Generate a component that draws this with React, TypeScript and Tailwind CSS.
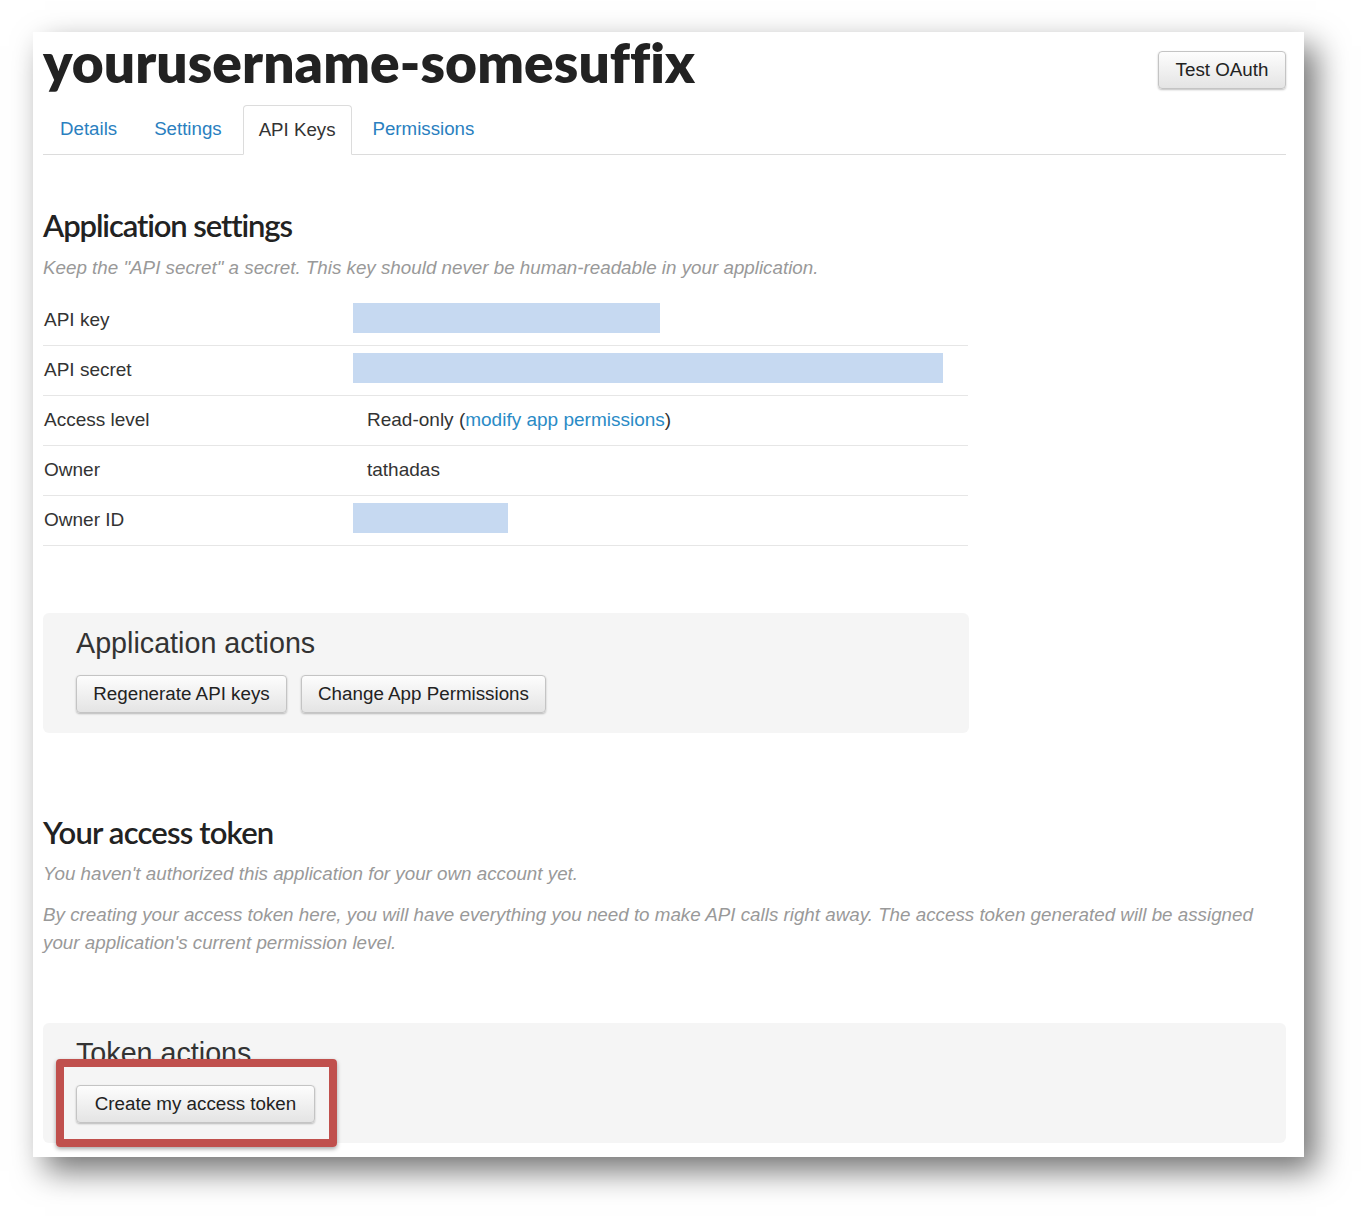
import React from "react";

const sans = "font-['Liberation_Sans',Arial,sans-serif]";

function Btn({ children, className = "" }: { children: React.ReactNode; className?: string }) {
  return (
    <button
      className={`h-[38px] rounded-[4px] border border-[#c4c4c4] bg-gradient-to-b from-[#fdfdfd] to-[#e4e4e4] px-[16px] text-[18.8px] text-[#222] shadow-[0_1px_2px_rgba(0,0,0,0.25)] ${className}`}
    >
      {children}
    </button>
  );
}

function Redact({ w }: { w: string }) {
  return <div className={`mb-[6px] h-[30px] bg-[#c6d9f1] ${w}`} />;
}

const rows: { label: string; value: React.ReactNode; redacted?: boolean }[] = [
  { label: "API key", value: <Redact w="w-[307px]" />, redacted: true },
  { label: "API secret", value: <Redact w="w-[590px]" />, redacted: true },
  {
    label: "Access level",
    value: (
      <span>
        Read-only (<a className="text-[#2a8bc6]">modify app permissions</a>)
      </span>
    ),
  },
  { label: "Owner", value: <span>tathadas</span> },
  { label: "Owner ID", value: <Redact w="w-[155px]" />, redacted: true },
];

const tabs = ["Details", "Settings", "API Keys", "Permissions"];

export default function App() {
  return (
    <div className={`min-h-[1222px] bg-white pt-[32px] pl-[33px] ${sans}`}>
      <div className="relative h-[1125px] w-[1271px] bg-white px-[10px] pr-[18px] shadow-[12px_14px_30px_rgba(0,0,0,0.55)]">
        {/* header */}
        <div className="flex items-start justify-between">
          <h1 className="mt-[-2px] font-['Lato',sans-serif] text-[55px] font-extrabold leading-[64px] tracking-[0.1px] text-[#222]">
            yourusername-somesuffix
          </h1>
          <Btn className="mt-[19px] w-[128px]">Test OAuth</Btn>
        </div>

        {/* tabs */}
        <div className="mt-[11px] flex h-[50px] items-end border-b border-[#dcdcdc] pl-[1px]">
          {tabs.map((t) => (
            <div
              key={t}
              className={
                t === "API Keys"
                  ? "mb-[-1px] mr-[5px] flex h-[50px] items-center rounded-t-[4px] border border-b-white border-[#dcdcdc] bg-white px-[15px] text-[18.7px] text-[#333]"
                  : "mr-[5px] flex h-[50px] items-center px-[16px] text-[18.7px] text-[#2a7fc0]"
              }
            >
              {t}
            </div>
          ))}
        </div>

        {/* application settings */}
        <h2 className="mt-[50px] font-['Lato',sans-serif] text-[31px] font-semibold leading-[40px] tracking-[-1.1px] text-[#222]">
          Application settings
        </h2>
        <p className="mt-[10px] text-[18.8px] italic leading-[26px] text-[#999]">
          Keep the "API secret" a secret. This key should never be human-readable in your application.
        </p>
        <div className="mt-[15px] w-[925px]">
          {rows.map((r) => (
            <div key={r.label} className="flex h-[50px] items-center border-b border-[#e6e6e6] text-[19px] text-[#333]">
              <div className="w-[310px] pl-[1px]">{r.label}</div>
              <div className={r.redacted ? "" : "pl-[14px]"}>{r.value}</div>
            </div>
          ))}
        </div>

        {/* application actions */}
        <div className="mt-[67px] h-[120px] w-[926px] rounded-[6px] bg-[#f5f5f5] px-[33px] pt-[12px]">
          <h3 className="text-[28.7px] leading-[36px] text-[#333]">Application actions</h3>
          <div className="mt-[14px] flex gap-[14px]">
            <Btn className="w-[211px]">Regenerate API keys</Btn>
            <Btn className="w-[245px]">Change App Permissions</Btn>
          </div>
        </div>

        {/* access token */}
        <h2 className="mt-[79px] font-['Lato',sans-serif] text-[31px] font-semibold leading-[40px] tracking-[-0.8px] text-[#222]">
          Your access token
        </h2>
        <p className="mt-[9px] text-[18.8px] italic leading-[26px] text-[#999]">
          You haven't authorized this application for your own account yet.
        </p>
        <p className="mt-[14px] text-[18.8px] italic leading-[28px] text-[#999]">
          By creating your access token here, you will have everything you need to make API calls right away. The access token generated will be assigned your application's current permission level.
        </p>

        {/* token actions */}
        <div className="relative mt-[66px] h-[120px] w-[1243px] rounded-[6px] bg-[#f5f5f5] px-[33px] pt-[12px]">
          <h3 className="text-[28.7px] leading-[36px] text-[#333]">Token actions</h3>
          <div className="mt-[14px] flex">
            <Btn className="w-[239px]">Create my access token</Btn>
          </div>
          <div className="absolute left-[13px] top-[36px] h-[88px] w-[281px] rounded-[4px] border-[8px] border-[#c0504d] shadow-[0_2px_4px_rgba(0,0,0,0.35)]" />
        </div>
      </div>
    </div>
  );
}
